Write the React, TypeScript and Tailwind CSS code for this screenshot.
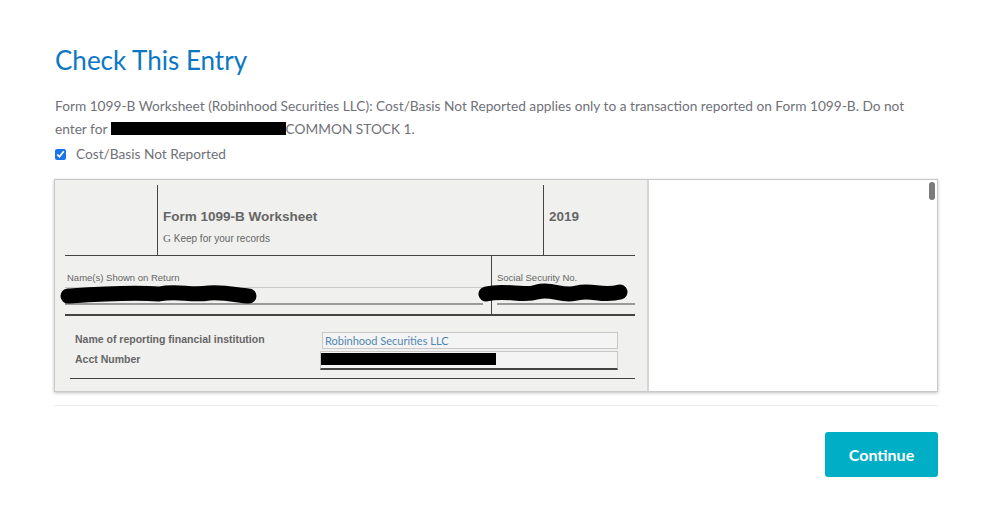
import React from "react";

/**
 * "Check This Entry" review screen with an embedded 1099-B worksheet preview
 */

function Scribble({ width, d }: { width: number; d: string }) {
  return (
    <svg width={width} height={24} viewBox={`0 0 ${width} 24`} className="block">
      <path d={d} stroke="#000" strokeWidth={15} strokeLinecap="round" strokeLinejoin="round" fill="none" />
    </svg>
  );
}

function Worksheet() {
  return (
    <div className="w-[594px] h-full bg-[#f0f0ee] border-r-2 border-[#d4d4d4] pt-[5px] pl-[10px] pr-[12px] text-[#666]" style={{ fontFamily: '"Liberation Sans", Arial, sans-serif' }}>
      {/* header row */}
      <div className="flex h-[71px] border-b border-[#444]">
        <div className="w-[93px] border-r border-[#444]"></div>
        <div className="w-[385px] pl-[5px] pt-[24px]">
          <div className="text-[13.5px] font-bold leading-[16px]">Form 1099-B Worksheet</div>
          <div className="text-[10px] leading-[14px] mt-[6px]">
            <span style={{ fontFamily: '"Liberation Serif", serif' }} className="text-[11px]">G</span> Keep for your records
          </div>
        </div>
        <div className="flex-1 border-l border-[#444] pl-[5px] pt-[24px]">
          <div className="text-[13.5px] font-bold leading-[16px]">2019</div>
        </div>
      </div>

      {/* name / ssn row */}
      <div className="flex h-[60px] border-b-2 border-[#444]">
        <div className="w-[427px] border-r border-[#444] pt-[16px]">
          <div className="text-[9.5px] leading-[12px] pl-[2px]">Name(s) Shown on Return</div>
          <div className="relative mt-[3px] mr-[8px] h-[18px] border-t border-[#c8c8c8] border-b-2 border-b-[#999]">
            <div className="absolute left-[-6px] top-[-5px]">
              <Scribble width={198} d="M9 13 C40 11 70 9 100 11 C120 7 130 13 150 10 C170 9 180 13 190 13" />
            </div>
          </div>
        </div>
        <div className="flex-1 pt-[16px] pl-[5px]">
          <div className="text-[9.5px] leading-[12px]">Social Security No.</div>
          <div className="relative mt-[3px] h-[18px] border-b-2 border-[#999]">
            <div className="absolute left-[-20px] top-[-5px]">
              <Scribble width={152} d="M9 12 C30 7 45 15 60 10 C75 6 85 15 100 11 C115 7 125 15 143 10" />
            </div>
          </div>
        </div>
      </div>

      {/* institution rows */}
      <div className="pt-[14px] pl-[10px]">
        <div className="flex items-center h-[20px]">
          <div className="w-[247px] text-[10.5px] font-bold">Name of reporting financial institution</div>
          <div className="w-[296px] h-[17px] border border-[#c8c8c8] bg-[#f4f4f4] px-[2px] text-[11px] leading-[15px] text-[#4f87b3]" style={{ fontFamily: '"Lato", sans-serif' }}>
            Robinhood Securities LLC
          </div>
        </div>
        <div className="flex items-center h-[20px]">
          <div className="w-[245px] text-[10.5px] font-bold">Acct Number</div>
          <div className="w-[298px] h-[19px] border border-[#c8c8c8] border-b-2 border-b-[#444] bg-[#f4f4f4] pt-[1px]">
            <div className="w-[175px] h-[12px] bg-black"></div>
          </div>
        </div>
        <div className="mt-[8px] ml-[-5px] border-b border-[#444]"></div>
      </div>
    </div>
  );
}

export default function App() {
  return (
    <div className="w-[998px] h-[514px] bg-white pl-[54px] pt-[44px]" style={{ fontFamily: '"Lato", "Noto Sans", sans-serif' }}>
      <h1 className="text-[26px] leading-[32px] text-[#0b77c4] pl-[1px]">Check This Entry</h1>

      <p className="mt-[18px] pl-[1px] w-[880px] text-[13.7px] leading-[23px] text-[#707178]">
        Form 1099-B Worksheet (Robinhood Securities LLC): Cost/Basis Not Reported applies only to a transaction reported on Form 1099-B. Do not
        <br />
        enter for <span className="inline-block w-[175px] h-[13px] bg-black align-[-1px]"></span>COMMON STOCK 1.
      </p>

      <label className="flex items-center gap-[10px] mt-[2px] pl-[1px] text-[13.7px] text-[#707178] h-[24px]">
        <input type="checkbox" defaultChecked className="w-[11px] h-[11px] accent-[#1a73e8]" />
        Cost/Basis Not Reported
      </label>

      <div className="mt-[13px] w-[884px] h-[213px] border border-[#c8c8c8] shadow-[0_1px_3px_rgba(0,0,0,0.25)] flex overflow-hidden">
        <Worksheet />
        <div className="flex-1 bg-white relative">
          <div className="absolute right-[2px] top-[2px] w-[6px] h-[18px] rounded-full bg-[#7a7a7a]"></div>
        </div>
      </div>

      <div className="mt-[13px] w-[884px] border-t border-[#ececec]"></div>

      <div className="w-[884px] flex justify-end mt-[26px]">
        <button className="w-[113px] h-[45px] rounded-[3px] bg-[#00aec6] text-white text-[16px] font-bold">Continue</button>
      </div>
    </div>
  );
}
